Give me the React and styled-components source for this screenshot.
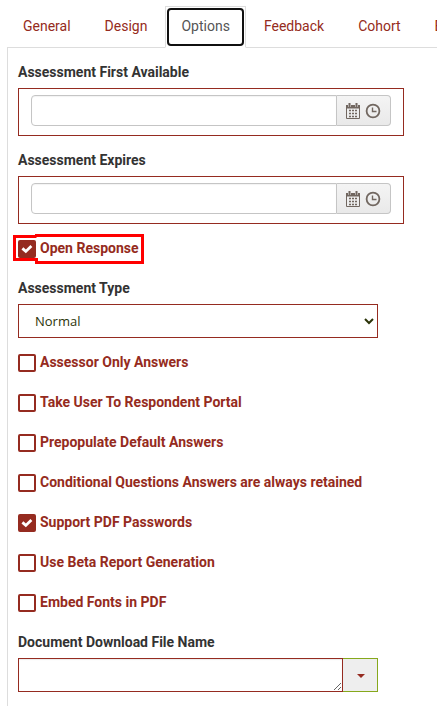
import React from 'react';
import styled, { createGlobalStyle } from 'styled-components';

const GlobalStyle = createGlobalStyle`
  * {
    box-sizing: border-box;
  }

  body {
    margin: 0;
    background: #ffffff;
    color: #333333;
    font-family: Roboto, sans-serif;
    font-size: 14px;
    line-height: 20px;
    overflow: hidden;
  }
`;

const Page = styled.main`
  padding: 6px 0 0 7px;
`;

const Tabs = styled.nav`
  display: flex;
  gap: 2px;
  border-bottom: 1px solid #dddddd;
`;

const Tab = styled.a`
  position: relative;
  flex: none;
  margin-bottom: -1px;
  padding: 9px 15px 11px;
  border: 1px solid ${({ $active }) => ($active ? '#dddddd' : 'transparent')};
  border-bottom-color: ${({ $active }) => ($active ? '#ffffff' : 'transparent')};
  color: ${({ $active }) => ($active ? '#555555' : '#952b20')};
  text-decoration: none;

  &::after {
    content: '';
    display: ${({ $active }) => ($active ? 'block' : 'none')};
    position: absolute;
    inset: 1px;
    border: 2px solid #101010;
    border-radius: 4px;
  }
`;

const Panel = styled.form`
  padding: 14px 10px;
  border-left: 1px solid #dddddd;
`;

const Field = styled.div`
  display: flex;
  flex-direction: column;
  gap: 6px;
  max-width: ${({ $wide }) => ($wide ? '386px' : '360px')};
  margin-bottom: 14px;
`;

const Label = styled.label`
  font-weight: bold;
`;

const DateBox = styled.div`
  display: flex;
  height: 48px;
  padding: 6px 12px 9px;
  border: 1px solid #952b20;
`;

const DateInput = styled.input`
  flex: 1;
  min-width: 0;
  padding: 4px 8px;
  border: 1px solid #c5c5c5;
  border-radius: 4px 0 0 4px;
  box-shadow: inset 0 1px 1px rgba(0, 0, 0, 0.05);
  font: inherit;
  outline: none;
`;

const DateButtons = styled.div`
  display: flex;
  align-items: center;
  gap: 4px;
  padding: 0 9px 0 8px;
  border: 1px solid #c5c5c5;
  border-left: 0;
  border-radius: 0 4px 4px 0;
  background: linear-gradient(#f4f4f4, #e9e9e9);
`;

const IconButton = styled.button`
  display: flex;
  padding: 0;
  border: 0;
  background: none;
  color: #716760;
`;

const CheckRow = styled.div`
  display: flex;
  position: relative;
  align-items: flex-end;
  gap: 4px;
  margin-bottom: 20px;
`;

const CheckBox = styled.span`
  display: grid;
  width: 18px;
  height: 18px;

  & > * {
    grid-area: 1 / 1;
  }

  & svg {
    pointer-events: none;
  }
`;

const CheckInput = styled.input`
  width: 18px;
  height: 18px;
  margin: 0;
  appearance: none;
  border: 2px solid #952b20;
  border-radius: 2px;
  background: #ffffff;

  &:checked {
    background: #952b20;
  }

  &:not(:checked) + svg {
    visibility: hidden;
  }
`;

const CheckLabel = styled(Label)`
  color: #952b20;
`;

const Highlight = styled.svg`
  position: absolute;
  top: -4px;
  left: -5px;
  pointer-events: none;
`;

const Select = styled.select`
  width: 100%;
  height: 34px;
  padding: 6px 12px;
  border: 1px solid #952b20;
  border-radius: 0;
  background: #ffffff;
  color: #2c3409;
  font: 13px/20px 'Open Sans', sans-serif;
`;

const FileGroup = styled.div`
  display: flex;
`;

const FileName = styled.textarea`
  flex: 1;
  min-width: 0;
  height: 34px;
  padding: 6px 12px;
  border: 1px solid #952b20;
  box-shadow: inset 0 1px 1px rgba(0, 0, 0, 0.08);
  font: inherit;
`;

const MenuButton = styled.button`
  display: flex;
  align-items: center;
  justify-content: center;
  width: 35px;
  padding: 2px 0 0 2px;
  border: 1px solid #86a81c;
  border-left: 0;
  background: #eeeeee;
`;

const Caret = styled.span`
  border-top: 4px solid #952b20;
  border-right: 4px solid transparent;
  border-left: 4px solid transparent;
`;

const CalendarIcon = () => (
  <svg width="16" height="16" viewBox="0 0 16 16" fill="none" stroke="currentColor">
    <path d="M1.5 2.5h13v13h-13z" />
    <path d="M1 3h14M1 4.5h14" strokeWidth="2" />
    <path d="M4.5 0v4M11.5 0v4" stroke="#efefef" strokeWidth="3" />
    <path d="M4.5 0v4M11.5 0v4" strokeWidth="2" />
    <path d="M4 7.5h9M4 10.5h9M4 13.5h9" strokeWidth="1.4" strokeDasharray="2 1" />
  </svg>
);

const ClockIcon = () => (
  <svg width="16" height="16" viewBox="0 0 16 16" fill="none" stroke="currentColor">
    <circle cx="8" cy="8" r="6.4" strokeWidth="1.8" />
    <path d="M7.5 4.5v4h4" strokeWidth="1.4" />
  </svg>
);

const DateField = ({ id, label }) => (
  <Field $wide>
    <Label htmlFor={id}>{label}</Label>
    <DateBox>
      <DateInput id={id} type="text" />
      <DateButtons>
        <IconButton type="button" aria-label="Open calendar"><CalendarIcon /></IconButton>
        <IconButton type="button" aria-label="Open time list"><ClockIcon /></IconButton>
      </DateButtons>
    </DateBox>
  </Field>
);

const CheckField = ({ id, label, checked, children }) => (
  <CheckRow>
    <CheckBox>
      <CheckInput id={id} type="checkbox" defaultChecked={checked} />
      <svg width="18" height="18" viewBox="0 0 18 18" fill="none" stroke="#ffffff" strokeWidth="2.8">
        <path d="M4.4 8.4 7.8 11.4 13.4 6" />
      </svg>
    </CheckBox>
    <CheckLabel htmlFor={id}>{label}</CheckLabel>
    {children}
  </CheckRow>
);

const tabs = ['General', 'Design', 'Options', 'Feedback', 'Cohort', 'Email'];

const options = [
  { id: 'assessorOnly', label: 'Assessor Only Answers' },
  { id: 'respondentPortal', label: 'Take User To Respondent Portal' },
  { id: 'prepopulate', label: 'Prepopulate Default Answers' },
  { id: 'conditional', label: 'Conditional Questions Answers are always retained' },
  { id: 'pdfPasswords', label: 'Support PDF Passwords', checked: true },
  { id: 'betaReport', label: 'Use Beta Report Generation' },
  { id: 'embedFonts', label: 'Embed Fonts in PDF' },
];

const App = () => (
  <Page>
    <GlobalStyle />
    <Tabs>
      {tabs.map((tab) => (
        <Tab key={tab} href={`#${tab.toLowerCase()}`} $active={tab === 'Options'}>
          {tab}
        </Tab>
      ))}
    </Tabs>
    <Panel>
      <DateField id="firstAvailable" label="Assessment First Available" />
      <DateField id="expires" label="Assessment Expires" />
      <CheckField id="openResponse" label="Open Response" checked>
        <Highlight width="131" height="30" fill="none" stroke="#ff0000" strokeWidth="3">
          <path d="M23.5 2.5H1.5V25.5H23.5V28.5H129.5V1.5H22" />
        </Highlight>
      </CheckField>
      <Field>
        <Label htmlFor="assessmentType">Assessment Type</Label>
        <Select id="assessmentType" defaultValue="Normal">
          <option>Normal</option>
        </Select>
      </Field>
      {options.map(({ id, label, checked }) => (
        <CheckField key={id} id={id} label={label} checked={checked} />
      ))}
      <Field>
        <Label htmlFor="fileName">Document Download File Name</Label>
        <FileGroup>
          <FileName id="fileName" />
          <MenuButton type="button" aria-label="Insert field"><Caret /></MenuButton>
        </FileGroup>
      </Field>
    </Panel>
  </Page>
);

export default App;
